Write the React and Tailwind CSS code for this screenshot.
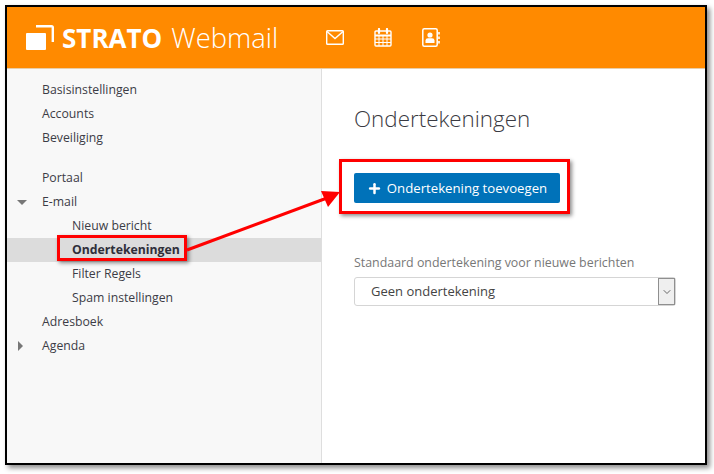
import React from 'react'
import { ChevronDown, Plus } from 'lucide-react'

const FONT = "font-['Open_Sans',sans-serif]"

function Logo() {
  return (
    <svg width="28" height="25" viewBox="0 0 28 25" fill="none" className="shrink-0">
      <rect x="0" y="8" width="20" height="17" rx="1" fill="#fff" />
      <path d="M10 1.2H25.5Q26.8 1.2 26.8 2.5V17" stroke="#fff" strokeWidth="2.4" />
    </svg>
  )
}

function MailIcon() {
  return (
    <svg width="18" height="15" viewBox="0 0 18 15" fill="none" stroke="#fff" strokeWidth="1.4">
      <rect x="0.7" y="0.7" width="16.6" height="13.6" rx="0.8" />
      <path d="M1 1.5L9 8.5L17 1.5" />
    </svg>
  )
}

function CalendarIcon() {
  return (
    <svg width="18" height="19" viewBox="0 0 18 19" fill="none" stroke="#fff">
      <rect x="1" y="3" width="16" height="15" rx="1" strokeWidth="1.4" />
      <path d="M1 7.5H17" strokeWidth="2" />
      <path d="M1 11H17M1 14.5H17M5 7V18M9 7V18M13 7V18" strokeWidth="1" />
      <path d="M5 1V5M13 1V5" strokeWidth="2.2" strokeLinecap="round" />
    </svg>
  )
}

function BookIcon() {
  return (
    <svg width="18" height="19" viewBox="0 0 18 19" fill="none">
      <rect x="0.8" y="0.8" width="14.4" height="17.4" rx="1.5" stroke="#fff" strokeWidth="1.5" />
      <circle cx="8" cy="7" r="2.6" fill="#fff" />
      <path d="M3.5 15V12.5Q3.5 10.2 6 10.2H10Q12.5 10.2 12.5 12.5V15Z" fill="#fff" />
      <path d="M17 4V6.5M17 8.5V11M17 13V15.5" stroke="#fff" strokeWidth="1.6" />
    </svg>
  )
}

function Row({ label, indent = false, caret, active = false, className = '' }) {
  return (
    <div className={`relative flex h-6 items-center text-[12.25px] ${indent ? 'pl-[65px]' : 'pl-[35px]'} ${active ? 'bg-[#dcdcdc] font-bold text-[#2f2f3a]' : 'text-[#3c3c46]'} ${className}`}>
      {caret === 'down' && <span className="absolute left-[10px] top-[10px] h-0 w-0 border-x-[5px] border-t-[5px] border-x-transparent border-t-[#777]" />}
      {caret === 'right' && <span className="absolute left-[11px] top-[7px] h-0 w-0 border-y-[5px] border-l-[5px] border-y-transparent border-l-[#777]" />}
      {label}
    </div>
  )
}

export default function App() {
  return (
    <div className={`h-[474px] w-[714px] overflow-hidden bg-white pl-[5px] pt-[5px] ${FONT}`}>
      <div className="relative flex h-[460px] w-[702px] flex-col border-2 border-black bg-white shadow-[3px_3px_5px_rgba(0,0,0,0.45)]">
        {/* Header */}
        <header className="flex h-[62px] shrink-0 items-center border-b border-[#e8cda8] bg-[#ff8a00] pl-[19px]">
          <Logo />
          <span className="ml-2 text-[26px] font-bold leading-none text-white">STRATO</span>
          <span className="ml-[9px] text-[27.4px] font-light leading-none text-white">Webmail</span>
          <div className="ml-[48px] flex items-center gap-[30px]">
            <MailIcon />
            <CalendarIcon />
            <BookIcon />
          </div>
        </header>

        <div className="flex min-h-0 flex-1">
          {/* Sidebar */}
          <nav className="w-[315px] shrink-0 border-r border-[#dedede] bg-[#f8f8f8] pt-[9px]">
            <Row label="Basisinstellingen" />
            <Row label="Accounts" />
            <Row label="Beveiliging" className="mb-4" />
            <Row label="Portaal" />
            <Row label="E-mail" caret="down" />
            <Row label="Nieuw bericht" indent />
            <Row label="Ondertekeningen" indent active />
            <Row label="Filter Regels" indent />
            <Row label="Spam instellingen" indent />
            <Row label="Adresboek" />
            <Row label="Agenda" caret="right" />
          </nav>

          {/* Content */}
          <main className="flex-1 pl-8 pr-[29px] pt-[34px]">
            <h1 className="text-[22.4px] font-light leading-[32px] text-[#3a3a42]">Ondertekeningen</h1>
            <button className="mt-[38px] flex h-[30px] w-[206px] items-center justify-center gap-[5px] rounded-[2px] bg-[#0072b9] pt-px text-[13.2px] text-white">
              <Plus size={15} strokeWidth={4} />
              Ondertekening toevoegen
            </button>
            <label className="mt-[51px] block text-[12.4px] leading-[18px] text-[#777]">Standaard ondertekening voor nieuwe berichten</label>
            <div className="mt-[5px] flex h-[29px] items-stretch rounded-[3px] border border-[#d5d5d5] bg-white">
              <span className="flex flex-1 items-center pl-4 pt-px text-[13px] text-[#444]">Geen ondertekening</span>
              <span className="flex w-[17px] items-center justify-center border border-[#8f8f8f] bg-[#efefef] text-[#444]">
                <ChevronDown size={12} strokeWidth={1.6} />
              </span>
            </div>
          </main>
        </div>

        {/* Red annotations over the page */}
        <div className="pointer-events-none absolute left-[50px] top-[228px] h-[26px] w-[130px] border-[3px] border-[#f00] shadow-[2px_2px_4px_rgba(0,0,0,0.45)]" />
        <div className="pointer-events-none absolute left-[332px] top-[152px] h-[55px] w-[231px] border-[3px] border-[#f00] shadow-[2px_2px_4px_rgba(0,0,0,0.45)]" />
        <svg className="pointer-events-none absolute left-[178px] top-[180px]" width="156" height="68" viewBox="0 0 156 68" fill="none">
          <path d="M2 63L142 11" stroke="#f00" strokeWidth="3" />
          <path d="M155 5L136 4L143 20Z" fill="#f00" />
        </svg>
      </div>
    </div>
  )
}
